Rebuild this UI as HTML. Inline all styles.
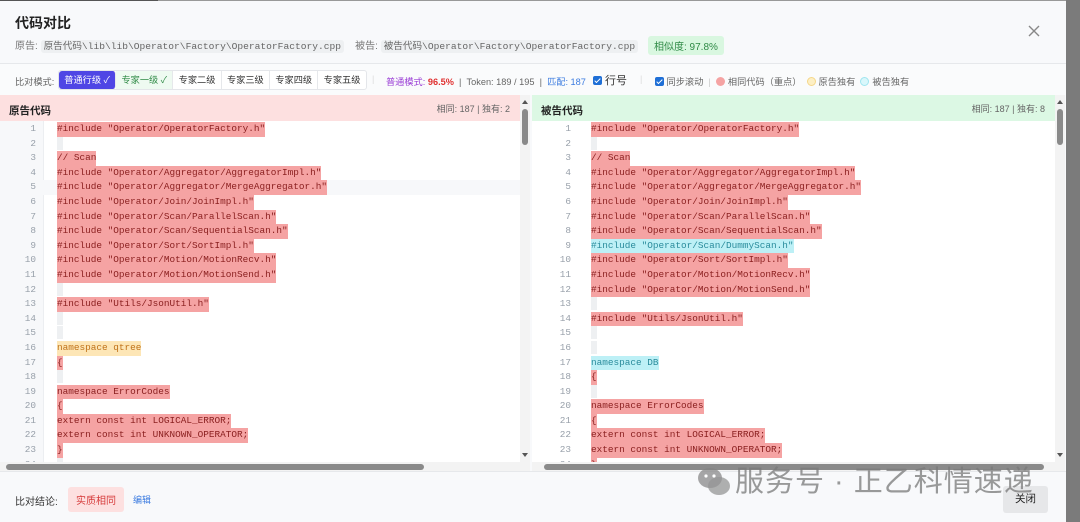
<!DOCTYPE html>
<html><head><meta charset="utf-8"><style>
*{margin:0;padding:0;box-sizing:border-box}
body{width:1080px;height:522px;overflow:hidden;background:#7b7b7b;font-family:"Liberation Sans","Noto Sans CJK SC",sans-serif;position:relative}
.dlg{position:absolute;left:0;top:0;width:1066px;height:522px;background:#f8f9fb}
.topline{position:absolute;left:0;top:0;width:158px;height:1px;background:#555}
.topline2{position:absolute;left:158px;top:0;width:908px;height:1px;background:#999}
.title{position:absolute;left:15px;top:13px;font-size:14px;font-weight:bold;color:#222}
.paths{position:absolute;left:15px;top:37px;font-size:10px;color:#777;white-space:nowrap}
.paths .p{background:#eef0f2;color:#666;padding:1px 3px;border-radius:3px;font-size:9.6px;font-family:'Liberation Mono','Noto Sans CJK SC',monospace}
.sim{position:absolute;left:648px;top:36px;background:#d9f7e0;color:#2f8a46;font-size:10px;padding:2px 6px;border-radius:3px}
.x{position:absolute;left:1025px;top:22px;width:18px;height:18px}
.hr{position:absolute;left:0;top:63px;width:1066px;height:1px;background:#e6e8eb}
.tb{position:absolute;left:0;top:64px;width:1066px;height:31px;background:#fafbfc;font-size:9.2px;color:#666}
.tb span{position:absolute;top:10px;white-space:nowrap}
.btns{position:absolute;left:58px;top:6px;height:20px;display:flex;border:1px solid #e4e6ea;border-radius:3px;background:#fff}
.btns div{padding:0 5.3px;line-height:18px;font-size:9.2px;color:#333;border-right:1px solid #e6e8eb}
.btns .a{background:#4f46e5;color:#fff;border-radius:3px}
.btns .g{background:#eefaf1;color:#2f8a46}
.cb{display:inline-block;width:9px;height:9px;background:#1f6fd6;border-radius:2px;vertical-align:-1px;position:relative}
.cb:after{content:"";position:absolute;left:3px;top:1px;width:2px;height:5px;border:solid #fff;border-width:0 1.5px 1.5px 0;transform:rotate(45deg)}
.dot{display:inline-block;width:9px;height:9px;border-radius:50%;vertical-align:-1px;margin-right:3px}
.pane{position:absolute;top:95px;height:376px;background:#fff;overflow:hidden}
.ph{position:absolute;left:0;top:0;right:0;height:26px;font-size:10.5px;font-weight:bold;color:#222;padding:8px 0 0 9px}
.ph i{position:absolute;right:10px;top:7px;font-style:normal;font-weight:normal;font-size:9px;color:#666}
.gut{position:absolute;left:0;top:26px;width:44px;bottom:9px;background:#f7f8fa;border-right:1px solid #eceef1}
.code{position:absolute;left:0;top:27px;right:0;font-family:"Liberation Mono",monospace;font-size:9.4px}
.l{height:14.6px;line-height:14.6px;position:relative;white-space:pre}
.n{position:absolute;left:0;width:36px;text-align:right;color:#98a0aa}
.t{position:absolute;left:57px}
.r{background:#f5a3a3;color:#8a1f1f}
.y{background:#fde6b6;color:#c0731a}
.c{background:#bdf0f6;color:#2a8c9c}
.e{display:inline-block;width:6px;height:13px;background:#eef0f2;vertical-align:top}
.vs{position:absolute;top:95px;width:10px;height:376px;background:#f3f3f3}
.vs .th{position:absolute;left:2px;top:14px;width:6px;height:36px;background:#8a8a8a;border-radius:3px}
.vs .up{position:absolute;left:2px;top:5px;border:3px solid transparent;border-bottom:4px solid #555;border-top:0}
.vs .dn{position:absolute;left:2px;bottom:14px;border:3px solid transparent;border-top:4px solid #555;border-bottom:0}
.hs{position:absolute;left:0;bottom:0;right:0;height:9px;background:#f3f3f3}
.hs .th{position:absolute;top:2px;height:6px;background:#8a8a8a;border-radius:3px}
.foot{position:absolute;left:0;top:471px;width:1066px;height:51px;background:#f8f9fb;border-top:1px solid #e6e8eb}
.wm{position:absolute;left:735px;top:458px;font-size:29px;color:rgba(120,120,120,.75);letter-spacing:1px;white-space:nowrap}
</style></head><body>
<div class="dlg">
<div class="topline"></div><div class="topline2"></div>
<div class="title">代码对比</div>
<div class="paths">原告: <span class="p">原告代码\lib\lib\Operator\Factory\OperatorFactory.cpp</span>&nbsp;&nbsp;&nbsp;&nbsp;被告: <span class="p">被告代码\Operator\Factory\OperatorFactory.cpp</span></div>
<div class="sim">相似度: 97.8%</div>
<svg class="x" viewBox="0 0 18 18"><path d="M4 4L14 14M14 4L4 14" stroke="#888" stroke-width="1.4"/></svg>
<div class="hr"></div>
<div class="tb">
<span style="left:15px">比对模式:</span>
<div class="btns"><div class="a">普通行级 ✓</div><div class="g">专家一级 ✓</div><div>专家二级</div><div>专家三级</div><div>专家四级</div><div style="border:0">专家五级</div></div>
<span style="left:372px;color:#ddd">|</span>
<span style="left:386px"><b style="color:#9b3fd6;font-weight:normal">普通模式:</b> <b style="color:#e03131">96.5%</b> &nbsp;|&nbsp; Token: 189 / 195 &nbsp;|&nbsp; <b style="color:#3b7be0;font-weight:normal">匹配: 187</b></span>
<span style="left:593px;top:8px;font-size:11px;color:#333"><i class="cb"></i> 行号</span>
<span style="left:640px;color:#ddd">|</span>
<span style="left:655px"><i class="cb"></i> 同步滚动 &nbsp;<b style="color:#ccc;font-weight:normal">|</b>&nbsp; <i class="dot" style="background:#f5a3a3"></i>相同代码（重点） &nbsp;<i class="dot" style="background:#fdefc4;border:1px solid #f5d78a"></i>原告独有 &nbsp;<i class="dot" style="background:#d9f7fb;border:1px solid #9fe5ef"></i>被告独有</span>
</div>

<div class="pane" style="left:0;width:520px">
<div class="ph" style="background:#fde0e0">原告代码<i>相同: 187 | 独有: 2</i></div>
<div class="gut"></div>
<div class="code">
<div class="l"><span class="n">1</span><span class="t r">#include "Operator/OperatorFactory.h"</span></div>
<div class="l"><span class="n">2</span><span class="t"><i class="e"></i></span></div>
<div class="l"><span class="n">3</span><span class="t r">// Scan</span></div>
<div class="l"><span class="n">4</span><span class="t r">#include "Operator/Aggregator/AggregatorImpl.h"</span></div>
<div class="l" style="background:#f7f8fa"><span class="n">5</span><span class="t r">#include "Operator/Aggregator/MergeAggregator.h"</span></div>
<div class="l"><span class="n">6</span><span class="t r">#include "Operator/Join/JoinImpl.h"</span></div>
<div class="l"><span class="n">7</span><span class="t r">#include "Operator/Scan/ParallelScan.h"</span></div>
<div class="l"><span class="n">8</span><span class="t r">#include "Operator/Scan/SequentialScan.h"</span></div>
<div class="l"><span class="n">9</span><span class="t r">#include "Operator/Sort/SortImpl.h"</span></div>
<div class="l"><span class="n">10</span><span class="t r">#include "Operator/Motion/MotionRecv.h"</span></div>
<div class="l"><span class="n">11</span><span class="t r">#include "Operator/Motion/MotionSend.h"</span></div>
<div class="l"><span class="n">12</span><span class="t"><i class="e"></i></span></div>
<div class="l"><span class="n">13</span><span class="t r">#include "Utils/JsonUtil.h"</span></div>
<div class="l"><span class="n">14</span><span class="t"><i class="e"></i></span></div>
<div class="l"><span class="n">15</span><span class="t"><i class="e"></i></span></div>
<div class="l"><span class="n">16</span><span class="t y">namespace qtree</span></div>
<div class="l"><span class="n">17</span><span class="t r">{</span></div>
<div class="l"><span class="n">18</span><span class="t"><i class="e"></i></span></div>
<div class="l"><span class="n">19</span><span class="t r">namespace ErrorCodes</span></div>
<div class="l"><span class="n">20</span><span class="t r">{</span></div>
<div class="l"><span class="n">21</span><span class="t r">extern const int LOGICAL_ERROR;</span></div>
<div class="l"><span class="n">22</span><span class="t r">extern const int UNKNOWN_OPERATOR;</span></div>
<div class="l"><span class="n">23</span><span class="t r">}</span></div>
<div class="l"><span class="n">24</span><span class="t"><i class="e"></i></span></div>
</div>
<div class="hs"><div class="th" style="left:6px;width:418px"></div></div>
</div>
<div class="vs" style="left:520px"><div class="up"></div><div class="th"></div><div class="dn"></div></div>

<div class="pane" style="left:532px;width:523px">
<div class="ph" style="background:#dcf8e4">被告代码<i>相同: 187 | 独有: 8</i></div>
<div class="code">
<div class="l"><span class="n" style="width:39px">1</span><span class="t r" style="left:59px">#include "Operator/OperatorFactory.h"</span></div>
<div class="l"><span class="n" style="width:39px">2</span><span class="t" style="left:59px"><i class="e"></i></span></div>
<div class="l"><span class="n" style="width:39px">3</span><span class="t r" style="left:59px">// Scan</span></div>
<div class="l"><span class="n" style="width:39px">4</span><span class="t r" style="left:59px">#include "Operator/Aggregator/AggregatorImpl.h"</span></div>
<div class="l"><span class="n" style="width:39px">5</span><span class="t r" style="left:59px">#include "Operator/Aggregator/MergeAggregator.h"</span></div>
<div class="l"><span class="n" style="width:39px">6</span><span class="t r" style="left:59px">#include "Operator/Join/JoinImpl.h"</span></div>
<div class="l"><span class="n" style="width:39px">7</span><span class="t r" style="left:59px">#include "Operator/Scan/ParallelScan.h"</span></div>
<div class="l"><span class="n" style="width:39px">8</span><span class="t r" style="left:59px">#include "Operator/Scan/SequentialScan.h"</span></div>
<div class="l"><span class="n" style="width:39px">9</span><span class="t c" style="left:59px">#include "Operator/Scan/DummyScan.h"</span></div>
<div class="l"><span class="n" style="width:39px">10</span><span class="t r" style="left:59px">#include "Operator/Sort/SortImpl.h"</span></div>
<div class="l"><span class="n" style="width:39px">11</span><span class="t r" style="left:59px">#include "Operator/Motion/MotionRecv.h"</span></div>
<div class="l"><span class="n" style="width:39px">12</span><span class="t r" style="left:59px">#include "Operator/Motion/MotionSend.h"</span></div>
<div class="l"><span class="n" style="width:39px">13</span><span class="t" style="left:59px"><i class="e"></i></span></div>
<div class="l"><span class="n" style="width:39px">14</span><span class="t r" style="left:59px">#include "Utils/JsonUtil.h"</span></div>
<div class="l"><span class="n" style="width:39px">15</span><span class="t" style="left:59px"><i class="e"></i></span></div>
<div class="l"><span class="n" style="width:39px">16</span><span class="t" style="left:59px"><i class="e"></i></span></div>
<div class="l"><span class="n" style="width:39px">17</span><span class="t c" style="left:59px">namespace DB</span></div>
<div class="l"><span class="n" style="width:39px">18</span><span class="t r" style="left:59px">{</span></div>
<div class="l"><span class="n" style="width:39px">19</span><span class="t" style="left:59px"><i class="e"></i></span></div>
<div class="l"><span class="n" style="width:39px">20</span><span class="t r" style="left:59px">namespace ErrorCodes</span></div>
<div class="l"><span class="n" style="width:39px">21</span><span class="t r" style="left:59px">{</span></div>
<div class="l"><span class="n" style="width:39px">22</span><span class="t r" style="left:59px">extern const int LOGICAL_ERROR;</span></div>
<div class="l"><span class="n" style="width:39px">23</span><span class="t r" style="left:59px">extern const int UNKNOWN_OPERATOR;</span></div>
<div class="l"><span class="n" style="width:39px">24</span><span class="t r" style="left:59px">}</span></div>
</div>
<div class="hs"><div class="th" style="left:12px;width:500px"></div></div>
</div>
<div class="vs" style="left:1055px"><div class="up"></div><div class="th"></div><div class="dn"></div></div>

<div class="foot">
<span style="position:absolute;left:15px;top:21px;font-size:10px;color:#333">比对结论:</span>
<span style="position:absolute;left:68px;top:15px;background:#fde0e0;color:#d63a3a;font-size:10px;padding:5px 8px;border-radius:3px">实质相同</span>
<span style="position:absolute;left:133px;top:21px;font-size:9px;color:#3b7be0">编辑</span>
<span style="position:absolute;left:1003px;top:14px;width:45px;height:27px;background:#e6e7e9;border-radius:3px;font-size:10.5px;color:#222;text-align:center;line-height:27px">关闭</span>
</div>
<svg style="position:absolute;left:696px;top:466px" width="36" height="32" viewBox="0 0 36 32"><ellipse cx="14" cy="12" rx="12" ry="10" fill="rgba(130,130,130,.7)"/><ellipse cx="23" cy="20" rx="11" ry="9" fill="rgba(150,150,150,.75)"/><circle cx="10" cy="10" r="1.6" fill="#fff"/><circle cx="18" cy="10" r="1.6" fill="#fff"/></svg>
<div class="wm">服务号 · 正乙科情速递</div>
</div>
</body></html>
